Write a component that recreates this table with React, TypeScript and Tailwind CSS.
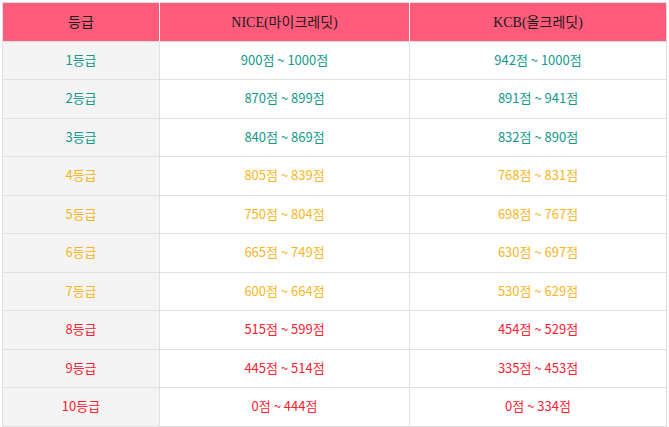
import React from 'react';

type Row = { grade: string; nice: string; kcb: string; tone: 'teal' | 'amber' | 'red' };

const rows: Row[] = [
  { grade: '1등급', nice: '900점 ~ 1000점', kcb: '942점 ~ 1000점', tone: 'teal' },
  { grade: '2등급', nice: '870점 ~ 899점', kcb: '891점 ~ 941점', tone: 'teal' },
  { grade: '3등급', nice: '840점 ~ 869점', kcb: '832점 ~ 890점', tone: 'teal' },
  { grade: '4등급', nice: '805점 ~ 839점', kcb: '768점 ~ 831점', tone: 'amber' },
  { grade: '5등급', nice: '750점 ~ 804점', kcb: '698점 ~ 767점', tone: 'amber' },
  { grade: '6등급', nice: '665점 ~ 749점', kcb: '630점 ~ 697점', tone: 'amber' },
  { grade: '7등급', nice: '600점 ~ 664점', kcb: '530점 ~ 629점', tone: 'amber' },
  { grade: '8등급', nice: '515점 ~ 599점', kcb: '454점 ~ 529점', tone: 'red' },
  { grade: '9등급', nice: '445점 ~ 514점', kcb: '335점 ~ 453점', tone: 'red' },
  { grade: '10등급', nice: '0점 ~ 444점', kcb: '0점 ~ 334점', tone: 'red' },
];

const toneClass = {
  teal: 'text-[#12998a]',
  amber: 'text-[#f6b526]',
  red: 'text-[#ff2030]',
};

export default function App() {
  return (
    <div className="w-[669px] h-[427px] bg-white pt-[2px] pl-[2px]">
      <table
        className="w-[665px] border-collapse table-fixed text-[13px] text-center"
        style={{ fontFamily: '"Noto Sans CJK KR", "Noto Sans", sans-serif' }}
      >
        <colgroup>
          <col className="w-[157px]" />
          <col className="w-[250px]" />
          <col />
        </colgroup>
        <thead>
          <tr
            className="h-[39px] bg-[#ff5c7c] text-[#1a1a1a] text-[14px]"
            style={{ fontFamily: '"Liberation Serif", "Noto Sans CJK KR", serif' }}
          >
            <th className="font-normal border border-[#e0e0e0] border-r-white">등급</th>
            <th className="font-normal border border-[#e0e0e0] border-r-white">NICE(마이크레딧)</th>
            <th className="font-normal border border-[#e0e0e0]">KCB(올크레딧)</th>
          </tr>
        </thead>
        <tbody>
          {rows.map((r, i) => (
            <tr key={r.grade} className={i % 2 === 0 ? 'h-[38px]' : 'h-[39px]'}>
              <td className={`border border-[#e0e0e0] bg-[#f4f4f4] pb-[2px] ${toneClass[r.tone]}`}>{r.grade}</td>
              <td className={`border border-[#e0e0e0] pb-[2px] ${toneClass[r.tone]}`}>{r.nice}</td>
              <td className={`border border-[#e0e0e0] pb-[2px] ${toneClass[r.tone]}`}>{r.kcb}</td>
            </tr>
          ))}
        </tbody>
      </table>
    </div>
  );
}
